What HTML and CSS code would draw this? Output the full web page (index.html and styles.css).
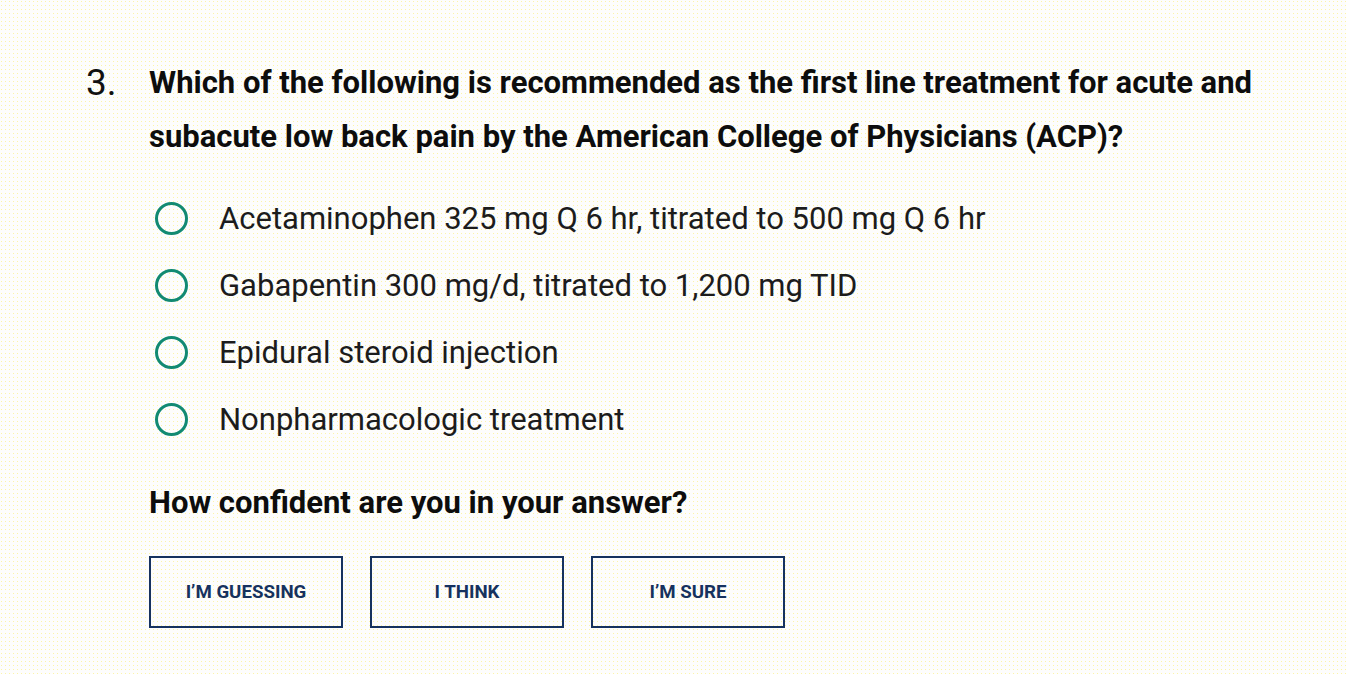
FILE: index.html
```html
<!DOCTYPE html>
<html>
<head>
<meta charset="utf-8">
<link rel="stylesheet" href="styles.css">
</head>
<body>
<main class="quiz">
  <div class="question">
    <div class="num">3.</div>
    <div class="body">
      <h2 class="qtext">Which of the following is recommended as the first line treatment for acute and subacute low back pain by the American College of Physicians (ACP)?</h2>
      <ul class="options">
        <li class="option"><span class="radio"></span><span class="label">Acetaminophen 325 mg Q 6 hr, titrated to 500 mg Q 6 hr</span></li>
        <li class="option"><span class="radio"></span><span class="label">Gabapentin 300 mg/d, titrated to 1,200 mg TID</span></li>
        <li class="option"><span class="radio"></span><span class="label">Epidural steroid injection</span></li>
        <li class="option"><span class="radio"></span><span class="label">Nonpharmacologic treatment</span></li>
      </ul>
      <h3 class="confidence">How confident are you in your answer?</h3>
      <div class="buttons">
        <button class="btn">I’M GUESSING</button>
        <button class="btn">I THINK</button>
        <button class="btn">I’M SURE</button>
      </div>
    </div>
  </div>
</main>
</body>
</html>
```
FILE: styles.css
```css
html, body {
  margin: 0;
  padding: 0;
}
body {
  width: 1346px;
  height: 674px;
  overflow: hidden;
  background-color: #fdfdfc;
  background-image: radial-gradient(circle at 1.5px 1.5px, #fcf4a8 0.6px, transparent 1px);
  background-size: 4px 4px;
  font-family: Roboto, "Liberation Sans", sans-serif;
  color: #111;
}
.quiz {
  padding: 56px 0 0 86px;
}
.question {
  display: flex;
}
.num {
  width: 63px;
  flex: none;
  font-size: 37px;
  line-height: 54px;
  color: #111;
}
.body {
  flex: 1;
  padding-right: 70px;
}
.qtext {
  margin: 0;
  font-size: 31px;
  font-weight: 700;
  line-height: 54px;
  color: #0d0d0d;
}
.options {
  list-style: none;
  margin: 21px 0 0 6px;
  padding: 0;
}
.option {
  display: flex;
  align-items: center;
  height: 67px;
}
.radio {
  width: 27px;
  height: 27px;
  border: 3.5px solid #128a72;
  border-radius: 50%;
  flex: none;
}
.label {
  margin-left: 31px;
  font-size: 31px;
  color: #1c1c1c;
}
.confidence {
  margin: 30px 0 0;
  font-size: 31px;
  font-weight: 700;
  line-height: 40px;
  color: #0d0d0d;
}
.buttons {
  display: flex;
  gap: 27px;
  margin-top: 33px;
}
.btn {
  width: 194px;
  height: 72px;
  background: transparent;
  border: 2px solid #16325e;
  color: #16325e;
  font-family: Roboto, "Liberation Sans", sans-serif;
  font-weight: 700;
  font-size: 18.7px;
  padding: 0;
  cursor: pointer;
}
```
